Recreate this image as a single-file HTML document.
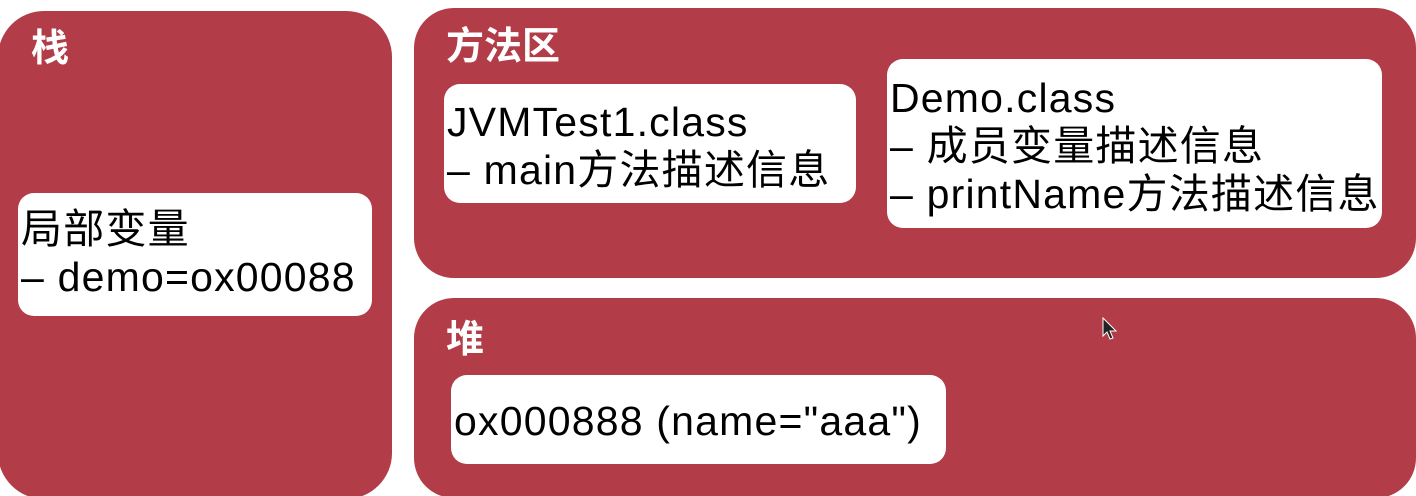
<!DOCTYPE html><html><head><meta charset="utf-8"><style>
html,body{margin:0;width:1416px;height:496px;overflow:hidden}
body{background:#fff;position:relative;font-family:"Liberation Sans","Noto Sans CJK SC",sans-serif}
.r{position:absolute;background:#b23c47}
.w{position:absolute;background:#fff;border-radius:16px;color:#000;font-size:41px;line-height:48px;white-space:nowrap;box-sizing:border-box;padding-left:3px;overflow:hidden;letter-spacing:1.2px}
.t{position:absolute;color:#fff;font-size:38px;font-weight:bold;line-height:40px}
</style></head><body>
<div class="r" style="left:-2px;top:11px;width:394px;height:488px;border-radius:46px"></div>
<div class="r" style="left:414px;top:8px;width:1002px;height:270px;border-radius:40px"></div>
<div class="r" style="left:414px;top:298px;width:1002px;height:200px;border-radius:40px"></div>
<div class="t" style="left:31px;top:29px">栈</div>
<div class="t" style="left:446px;top:27px">方法区</div>
<div class="t" style="left:446px;top:320px">堆</div>
<div class="w" style="left:18px;top:193px;width:354px;height:123px;padding-top:12px">局部变量<br>– demo=ox00088</div>
<div class="w" style="left:444px;top:84px;width:412px;height:119px;padding-top:14px">JVMTest1.class<br>– main方法描述信息</div>
<div class="w" style="left:887px;top:59px;width:495px;height:169px;padding-top:15px">Demo.class<br>– 成员变量描述信息<br>– printName方法描述信息</div>
<div class="w" style="left:451px;top:375px;width:495px;height:89px;padding-top:22px">ox000888 (name="aaa")</div>
<svg style="position:absolute;left:1100px;top:316px" width="20" height="26"><path d="M3 2 L3 20 L7 16 L10 23 L13 22 L10 15 L16 15 Z" fill="#222" stroke="#fff" stroke-width="1"/></svg>
</body></html>
